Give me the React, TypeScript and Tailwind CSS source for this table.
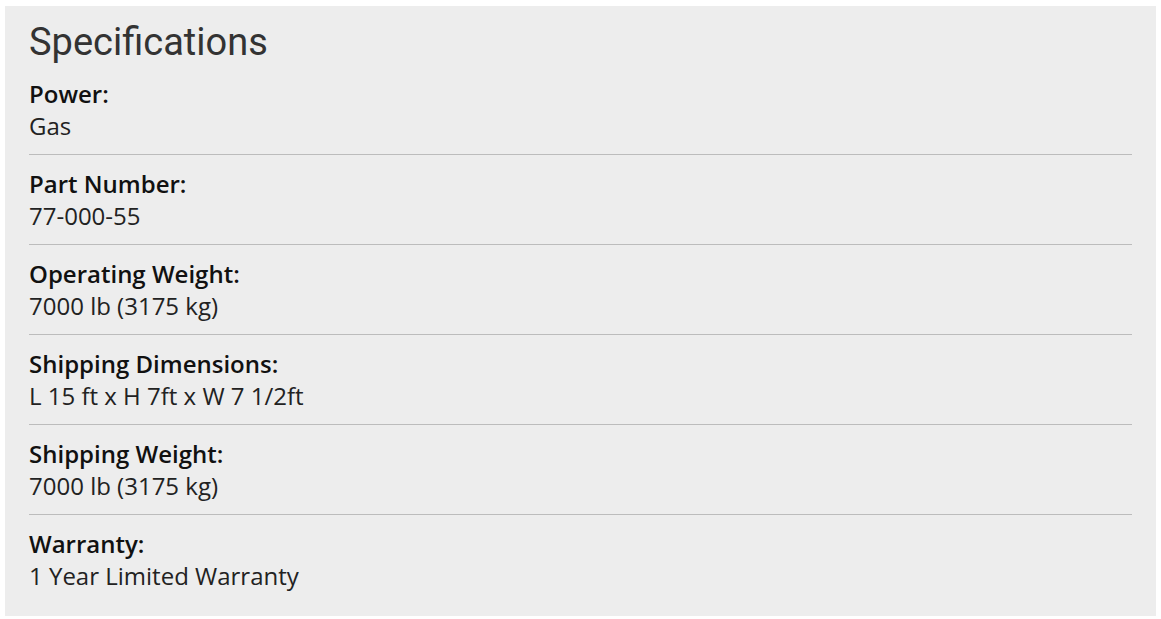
const rows = [
  ["Power:", "Gas"],
  ["Part Number:", "77-000-55"],
  ["Operating Weight:", "7000 lb (3175 kg)"],
  ["Shipping Dimensions:", "L 15 ft x H 7ft x W 7 1/2ft"],
  ["Shipping Weight:", "7000 lb (3175 kg)"],
  ["Warranty:", "1 Year Limited Warranty"],
];

export default function App() {
  return (
    <div className="w-[1161px] h-[619px] bg-white pt-[6px] pl-[5px]">
      <div className="w-[1151px] h-[610px] bg-[#ededed] px-[24px]">
        <h2 className="font-['Roboto',sans-serif] text-[38px] leading-[44px] text-[#333] pt-[14px] h-[72px]">
          Specifications
        </h2>
        <div className="font-['Open_Sans',sans-serif] text-[24px] leading-[32px]">
          {rows.map(([k, v], i) => (
            <div
              key={k}
              className={
                (i > 0 ? "border-t border-[#bcbcbc] pt-[13px] " : "") + "pb-[12px]"
              }
            >
              <div className="font-semibold text-[#111]">{k}</div>
              <div className="text-[#222]">{v}</div>
            </div>
          ))}
        </div>
      </div>
    </div>
  );
}
